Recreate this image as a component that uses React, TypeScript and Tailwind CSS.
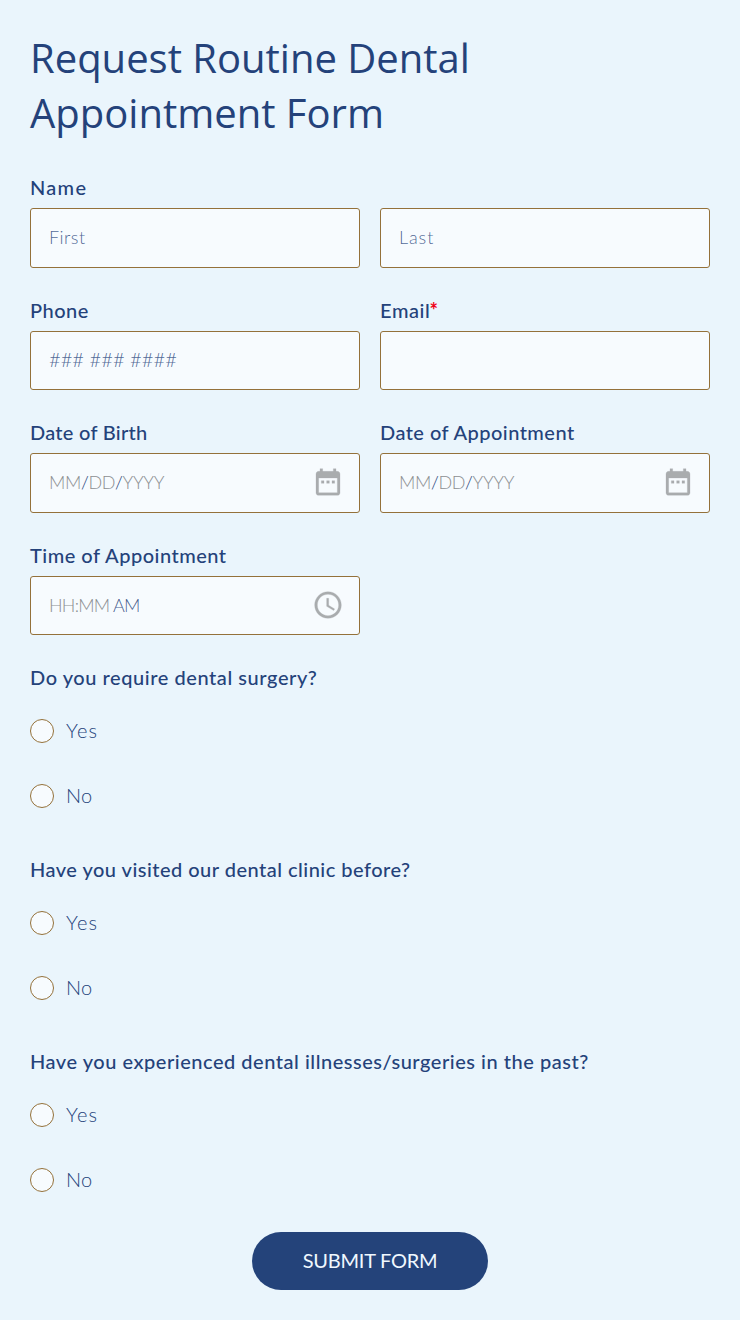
import type { ReactNode } from "react";

const CALENDAR =
  "M9 11H7v2h2v-2zm4 0h-2v2h2v-2zm4 0h-2v2h2v-2zm2-7h-1V2h-2v2H8V2H6v2H5c-1.11 0-1.99.9-1.99 2L3 20c0 1.1.89 2 2 2h14c1.1 0 2-.9 2-2V6c0-1.1-.9-2-2-2zm0 16H5V9h14v11z";
const CLOCK =
  "M11.99 2C6.47 2 2 6.48 2 12s4.47 10 9.99 10C17.52 22 22 17.52 22 12S17.52 2 11.99 2zM12 20c-4.42 0-8-3.58-8-8s3.58-8 8-8 8 3.58 8 8-3.58 8-8 8zm.5-13H11v6l5.25 3.15.75-1.23-4.5-2.67z";

function Icon({ d }: { d: string }) {
  return (
    <svg viewBox="0 0 24 24" className="size-8 shrink-0 fill-[#a9acae] stroke-[#a9acae] stroke-[0.2]" aria-hidden="true">
      <path d={d} />
    </svg>
  );
}

function Label({ children, tracking }: { children: ReactNode; tracking: string }) {
  return (
    <div className={`h-[25px] whitespace-nowrap text-xl leading-[25px] font-medium ${tracking}`}>
      {children}
    </div>
  );
}

function Box({ children, icon }: { children?: ReactNode; icon?: string }) {
  return (
    <div className="mt-[8.1px] flex h-[59.4px] items-center justify-between rounded-[3px] border border-[#94713a] bg-[#f7fbfe] pr-[15.4px] pb-[1.5px] pl-[18px] text-lg font-light whitespace-nowrap">
      <span>{children}</span>
      {icon && <Icon d={icon} />}
    </div>
  );
}

function DateMask() {
  return (
    <span className="tracking-[-0.35px] text-[#8c8f92]">
      MM<span className="text-[#24427a]">/</span>DD<span className="text-[#24427a]">/</span>YYYY
    </span>
  );
}

function Question({ children, tracking }: { children: ReactNode; tracking: string }) {
  return (
    <fieldset className="h-48">
      <Label tracking={tracking}>{children}</Label>
      <div className="mt-[28.5px] flex flex-col gap-[41px]">
        <Option tracking="tracking-[1.2px]">Yes</Option>
        <Option tracking="tracking-[0.3px]">No</Option>
      </div>
    </fieldset>
  );
}

function Option({ children, tracking }: { children: ReactNode; tracking: string }) {
  return (
    <label className="flex h-6 items-center gap-3">
      <span className="size-6 rounded-full border border-[#94713a] bg-[#f7fbfe]" />
      <span className={`pb-0.5 text-xl leading-6 font-light ${tracking}`}>{children}</span>
    </label>
  );
}

export default function App() {
  return (
    <form className="flex h-[1320px] w-[740px] flex-col bg-[#eaf5fc] px-[30px] pt-[30px] font-['Lato',sans-serif] text-[#24427a]">
      <h1 className="h-[145.1px] w-[500px] font-['Open_Sans',sans-serif] text-[40px] leading-[55px] font-normal">
        Request Routine Dental Appointment Form
      </h1>

      <div className="grid auto-rows-[122.6px] grid-cols-2 gap-x-5">
        <div>
          <Label tracking="tracking-[1.3px]">Name</Label>
          <Box>
            <span className="tracking-[0.5px] text-[#24427a]/80">First</span>
          </Box>
        </div>
        <div className="pt-[25px]">
          <Box>
            <span className="tracking-[0.9px] text-[#24427a]/80">Last</span>
          </Box>
        </div>
        <div>
          <Label tracking="tracking-[0.5px]">Phone</Label>
          <Box>
            <span className="text-xl tracking-[0.08px] text-[#24427a]/80">### ### ####</span>
          </Box>
        </div>
        <div>
          <Label tracking="tracking-[0.6px]">
            Email<span className="-ml-px font-bold tracking-normal text-[#f00016]">*</span>
          </Label>
          <Box />
        </div>
        <div>
          <Label tracking="tracking-[0.28px]">Date of Birth</Label>
          <Box icon={CALENDAR}>
            <DateMask />
          </Box>
        </div>
        <div>
          <Label tracking="tracking-[0.46px]">Date of Appointment</Label>
          <Box icon={CALENDAR}>
            <DateMask />
          </Box>
        </div>
        <div>
          <Label tracking="tracking-[0.5px]">Time of Appointment</Label>
          <Box icon={CLOCK}>
            <span className="tracking-[-0.75px] text-[#8c8f92]">
              HH:MM <span className="text-[#24427a]/85">AM</span>
            </span>
          </Box>
        </div>
      </div>

      <Question tracking="tracking-[0.56px]">Do you require dental surgery?</Question>
      <Question tracking="tracking-[0.48px]">Have you visited our dental clinic before?</Question>
      <Question tracking="tracking-[0.525px]">
        Have you experienced dental illnesses/surgeries in the past?
      </Question>

      <button
        type="button"
        className="mt-[-9.5px] h-[58px] w-[236px] shrink-0 self-center rounded-full bg-[#24437a] pb-0.5 text-xl tracking-[-0.25px] text-[#f0f8ff]"
      >
        SUBMIT FORM
      </button>
    </form>
  );
}
